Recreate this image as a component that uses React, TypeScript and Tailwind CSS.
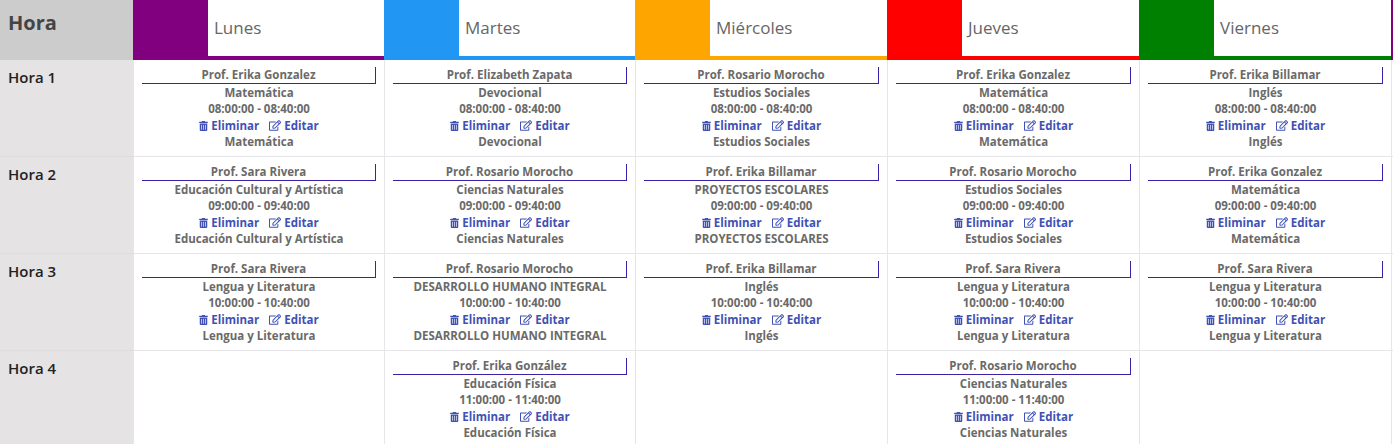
import React from 'react';
import { FaTrashAlt, FaRegEdit } from 'react-icons/fa';

type Clase = { profesor: string; materia: string };

const dias = [
  { nombre: 'Lunes', color: 'bg-[#800080]', borde: 'border-[#800080]' },
  { nombre: 'Martes', color: 'bg-[#2196f3]', borde: 'border-[#2196f3]' },
  { nombre: 'Miércoles', color: 'bg-[#ffa500]', borde: 'border-[#ffa500]' },
  { nombre: 'Jueves', color: 'bg-[#ff0000]', borde: 'border-[#ff0000]' },
  { nombre: 'Viernes', color: 'bg-[#008000]', borde: 'border-[#008000]' },
  // columna siguiente, cortada por el borde de la ventana
  { nombre: '', color: 'bg-[#800080]', borde: 'border-[#800080]' },
];

const horas: { nombre: string; horario: string; clases: (Clase | null)[] }[] = [
  {
    nombre: 'Hora 1',
    horario: '08:00:00 - 08:40:00',
    clases: [
      { profesor: 'Prof. Erika Gonzalez', materia: 'Matemática' },
      { profesor: 'Prof. Elizabeth Zapata', materia: 'Devocional' },
      { profesor: 'Prof. Rosario Morocho', materia: 'Estudios Sociales' },
      { profesor: 'Prof. Erika Gonzalez', materia: 'Matemática' },
      { profesor: 'Prof. Erika Billamar', materia: 'Inglés' },
      null,
    ],
  },
  {
    nombre: 'Hora 2',
    horario: '09:00:00 - 09:40:00',
    clases: [
      { profesor: 'Prof. Sara Rivera', materia: 'Educación Cultural y Artística' },
      { profesor: 'Prof. Rosario Morocho', materia: 'Ciencias Naturales' },
      { profesor: 'Prof. Erika Billamar', materia: 'PROYECTOS ESCOLARES' },
      { profesor: 'Prof. Rosario Morocho', materia: 'Estudios Sociales' },
      { profesor: 'Prof. Erika Gonzalez', materia: 'Matemática' },
      null,
    ],
  },
  {
    nombre: 'Hora 3',
    horario: '10:00:00 - 10:40:00',
    clases: [
      { profesor: 'Prof. Sara Rivera', materia: 'Lengua y Literatura' },
      { profesor: 'Prof. Rosario Morocho', materia: 'DESARROLLO HUMANO INTEGRAL' },
      { profesor: 'Prof. Erika Billamar', materia: 'Inglés' },
      { profesor: 'Prof. Sara Rivera', materia: 'Lengua y Literatura' },
      { profesor: 'Prof. Sara Rivera', materia: 'Lengua y Literatura' },
      null,
    ],
  },
  {
    nombre: 'Hora 4',
    horario: '11:00:00 - 11:40:00',
    clases: [
      null,
      { profesor: 'Prof. Erika González', materia: 'Educación Física' },
      null,
      { profesor: 'Prof. Rosario Morocho', materia: 'Ciencias Naturales' },
      null,
      null,
    ],
  },
];

function Celda({ clase, horario }: { clase: Clase | null; horario: string }) {
  return (
    <div className="h-[97px] border-l border-b border-[#e6e6ea] bg-white px-2 pt-[7px] text-center text-[11.5px] font-bold leading-[16.3px] text-[#6a6a6a]">
      {clase && (
        <>
          <div className="border-b border-r border-[#3a22a8] leading-[16px]">{clase.profesor}</div>
          <div className="mt-px">{clase.materia}</div>
          <div>{horario}</div>
          <div className="flex items-center justify-center gap-[10px] text-[#3f51b5]">
            <span className="flex items-center gap-[3px]">
              <FaTrashAlt className="h-[10px] w-[9px]" />
              Eliminar
            </span>
            <span className="flex items-center gap-[3px]">
              <FaRegEdit className="h-[11px] w-[12px]" />
              Editar
            </span>
          </div>
          <div>{clase.materia}</div>
        </>
      )}
    </div>
  );
}

export default function App() {
  return (
    <div className="h-[444px] w-full overflow-hidden bg-white font-['Open_Sans',sans-serif]">
      <div className="grid w-max grid-cols-[133px_251px_251px_252px_252px_252px_252px]">
        {/* Cabecera */}
        <div className="h-[60px] bg-[#cccccc] pl-2 pt-2 text-[20px] font-bold leading-[29px] text-[#444444]">
          Hora
        </div>
        {dias.map((dia, i) => (
          <div key={i} className="flex h-[60px]">
            <div className={`w-[75px] shrink-0 ${dia.color}`} />
            <div className={`flex flex-1 items-center border-b-4 pl-1.5 pb-px text-[17px] text-[#666666] ${dia.borde}`}>
              {dia.nombre}
            </div>
          </div>
        ))}

        {/* Filas */}
        {horas.map(hora => (
          <React.Fragment key={hora.nombre}>
            <div className="h-[97px] border-b border-[#dedcdd] bg-[#e5e3e4] pl-2 pt-[7px] text-[15px] font-semibold leading-5 text-[#222222]">
              {hora.nombre}
            </div>
            {hora.clases.map((clase, i) => (
              <Celda key={i} clase={clase} horario={hora.horario} />
            ))}
          </React.Fragment>
        ))}
      </div>
    </div>
  );
}
